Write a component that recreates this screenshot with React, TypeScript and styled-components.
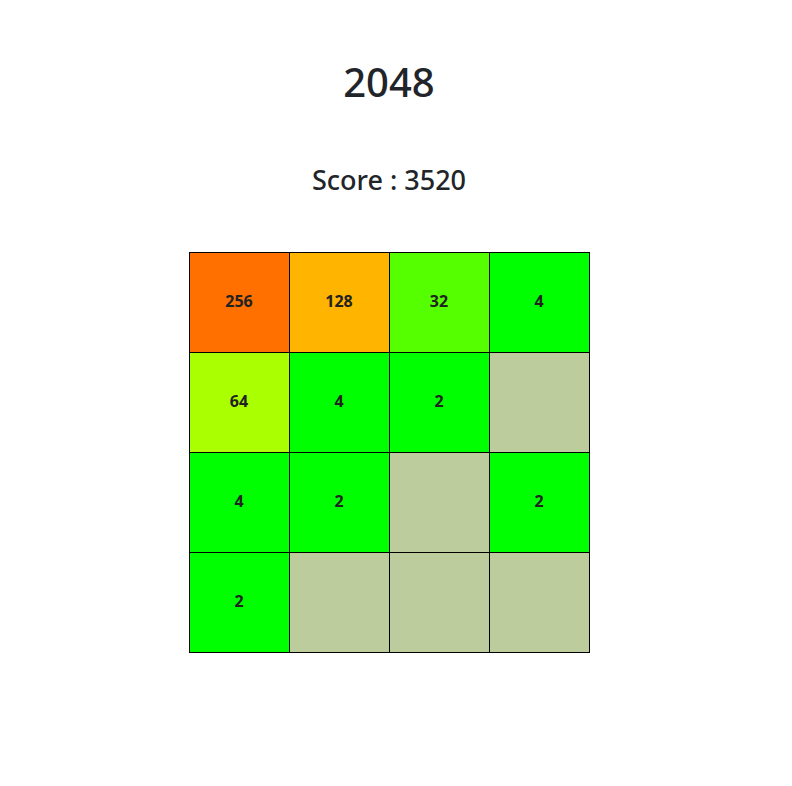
import styled, { createGlobalStyle } from "styled-components";

const GlobalStyle = createGlobalStyle`
  body {
    margin: 0;
    background: #fff;
    font-family: "Noto Sans", "Open Sans", sans-serif;
    color: #212529;
  }
`;

// page is laid out as if a 15px scrollbar took the right edge
const Wrapper = styled.div`
  display: flex;
  flex-direction: column;
  align-items: center;
  padding: 56px 14px 0 0;
`;
const Title = styled.h1`
  margin: 0;
  font-size: 40px;
  font-weight: 500;
  line-height: 52px;
`;
const Score = styled.h3`
  margin: 54px 0 0 0;
  font-size: 27px;
  font-weight: 500;
  line-height: 36px;
`;
const Board = styled.div`
  display: grid;
  grid-template-columns: repeat(4, 100px);
  grid-template-rows: repeat(4, 100px);
  margin-top: 54px;
  border-top: 1px solid #000;
  border-left: 1px solid #000;
`;
const Cell = styled.div<{ $bg: string }>`
  display: flex;
  justify-content: center;
  align-items: center;
  padding-bottom: 3px;
  background-color: ${(p) => p.$bg};
  border-right: 1px solid #000;
  border-bottom: 1px solid #000;
  font-size: 16px;
  font-weight: 700;
  color: #222;
`;

const colors: Record<number, string> = {
  0: "#bdcc9d",
  2: "#00ff00",
  4: "#00ff00",
  32: "#55ff00",
  64: "#aaff00",
  128: "#ffb400",
  256: "#ff7000",
};

const board = [
  [256, 128, 32, 4],
  [64, 4, 2, 0],
  [4, 2, 0, 2],
  [2, 0, 0, 0],
];

const App = () => {
  return (
    <>
      <GlobalStyle />
      <Wrapper>
        <Title>2048</Title>
        <Score>Score : 3520</Score>
        <Board>
          {board.flat().map((value, i) => (
            <Cell key={i} $bg={colors[value]}>
              {value !== 0 ? value : ""}
            </Cell>
          ))}
        </Board>
      </Wrapper>
    </>
  );
};

export default App;
